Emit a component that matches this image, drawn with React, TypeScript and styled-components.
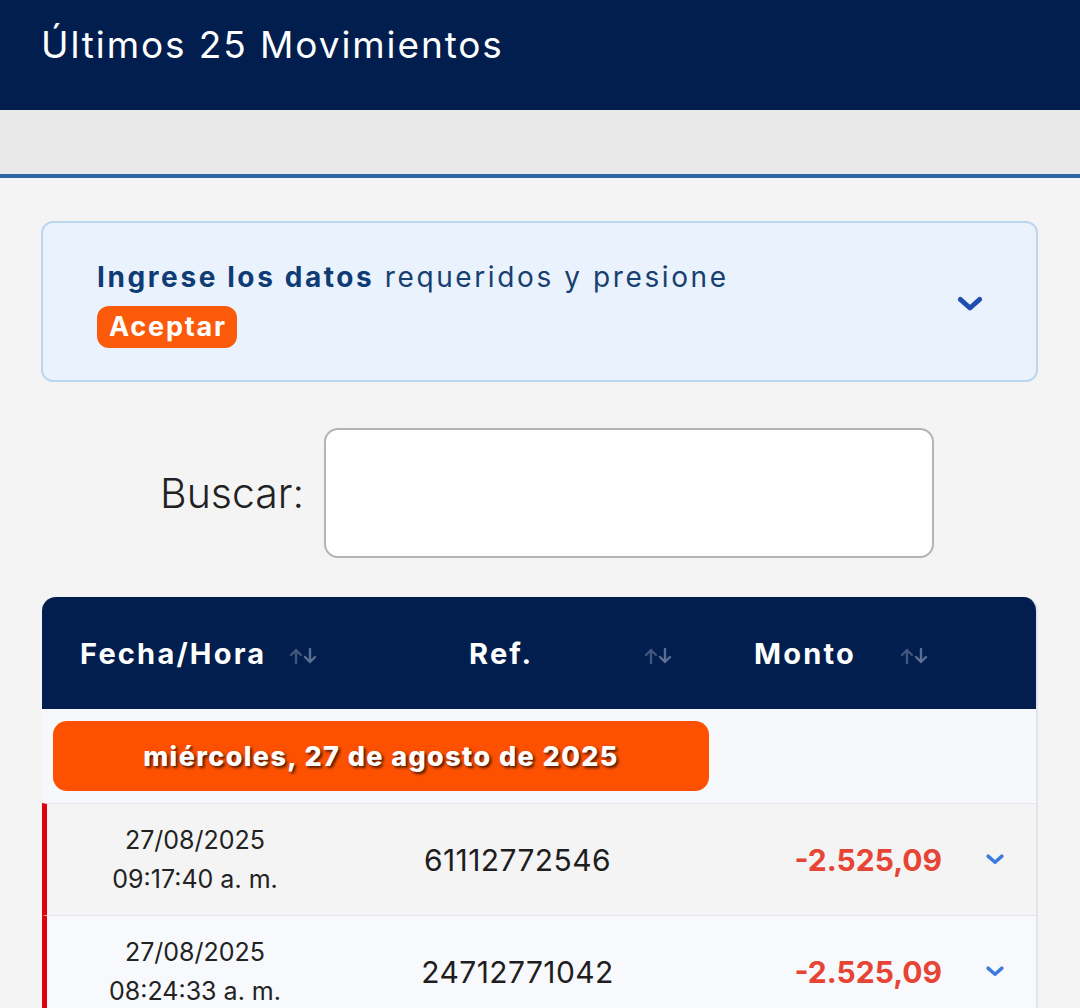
import { createGlobalStyle, styled } from "styled-components";

const GlobalStyle = createGlobalStyle`
  body {
    margin: 0;
    background: #f4f4f4;
    font-family: Inter, "Open Sans", sans-serif;
    color: #222;
  }
`;

type Movement = {
  date: string;
  time: string;
  ref: string;
  amount: string;
};

const movements: Movement[] = [
  { date: "27/08/2025", time: "09:17:40 a. m.", ref: "61112772546", amount: "-2.525,09" },
  { date: "27/08/2025", time: "08:24:33 a. m.", ref: "24712771042", amount: "-2.525,09" },
];

function Chevron({ color, width }: { color: string; width: number }) {
  return (
    <svg width={width} height={width * 0.62} viewBox="0 0 26 16" fill="none">
      <path d="M4 4 L13 12 L22 4" stroke={color} strokeWidth="4.5" strokeLinecap="round" strokeLinejoin="round" />
    </svg>
  );
}

function SortIcon() {
  return (
    <svg width="32" height="18" viewBox="0 0 32 18" fill="none">
      <path d="M9 16 V3 M4 8 L9 3 L14 8" stroke="#42567c" strokeWidth="2.4" strokeLinecap="round" strokeLinejoin="round" />
      <path d="M23 2 V15 M18 10 L23 15 L28 10" stroke="#5a6e93" strokeWidth="2.4" strokeLinecap="round" strokeLinejoin="round" />
    </svg>
  );
}

function App() {
  return (
    <>
      <GlobalStyle />
      <Header>
        <h1>Últimos 25 Movimientos</h1>
      </Header>
      <SubBar />
      <Content>
        <InfoBox>
          <div>
            <InfoText>
              <strong>Ingrese los datos</strong> requeridos y presione
            </InfoText>
            <Badge>Aceptar</Badge>
          </div>
          <Chevron color="#1c4fae" width={28} />
        </InfoBox>

        <SearchRow>
          <label htmlFor="buscar">Buscar:</label>
          <SearchInput id="buscar" type="text" />
        </SearchRow>

        <Table>
          <HeadRow>
            <HeadCell $pad={38} $gap={21}>
              Fecha/Hora <SortIcon />
            </HeadCell>
            <HeadCell $pad={120} $gap={109}>
              Ref. <SortIcon />
            </HeadCell>
            <HeadCell $pad={72} $gap={42}>
              Monto <SortIcon />
            </HeadCell>
            <div />
          </HeadRow>
          <GroupRow>
            <DateChip>miércoles, 27 de agosto de 2025</DateChip>
          </GroupRow>
          {movements.map((m, i) => (
            <Row key={m.ref} $alt={i % 2 === 1}>
              <DateCell>
                <span>{m.date}</span>
                <span>{m.time}</span>
              </DateCell>
              <RefCell>{m.ref}</RefCell>
              <AmountCell>{m.amount}</AmountCell>
              <ToggleCell>
                <Chevron color="#3b7be0" width={20} />
              </ToggleCell>
            </Row>
          ))}
        </Table>
      </Content>
    </>
  );
}

const Header = styled.header`
  height: 110px;
  background: #011e4f;
  padding: 21px 41px 0;
  box-sizing: border-box;

  h1 {
    margin: 0;
    font-size: 37px;
    line-height: 48px;
    letter-spacing: 1.9px;
    font-weight: 400;
    color: #fff;
  }
`;

const SubBar = styled.div`
  height: 64px;
  background: #e9e9e9;
  border-bottom: 4px solid #2c64a5;
`;

const Content = styled.main`
  height: 830px;
  overflow: hidden;
  padding: 43px 42px 0 41px;
  box-sizing: border-box;
`;

const InfoBox = styled.section`
  height: 161px;
  box-sizing: border-box;
  display: flex;
  align-items: center;
  justify-content: space-between;
  padding: 4px 52px 0 54px;
  background: #e9f2fd;
  border: 2px solid #bcd6f0;
  border-radius: 12px;
`;

const InfoText = styled.p`
  margin: 0 0 12px;
  font-size: 28px;
  letter-spacing: 2.6px;
  color: #17406f;
  font-weight: 400;

  strong {
    font-weight: 700;
    color: #0f3c74;
  }
`;

const Badge = styled.span`
  display: inline-block;
  background: #fa5a0a;
  color: #fff;
  font-weight: 700;
  font-size: 27px;
  letter-spacing: 1.8px;
  line-height: 42px;
  padding: 0 10px 0 12px;
  border-radius: 12px;
`;

const SearchRow = styled.div`
  display: flex;
  align-items: center;
  gap: 20px;
  margin-top: 46px;
  padding-left: 119px;

  label {
    font-size: 41px;
    font-weight: 300;
    color: #222;
  }
`;

const SearchInput = styled.input`
  width: 610px;
  height: 130px;
  box-sizing: border-box;
  border: 2px solid #b4b4b4;
  border-radius: 14px;
  background: #fff;
  outline: none;
`;

const Table = styled.div`
  margin-top: 39px;
  margin-left: 1px;
  border-right: 2px solid #e2e4ea;
  border-radius: 14px 14px 0 0;
  overflow: hidden;
`;

const columns = "307px 333px 284px 1fr";

const HeadRow = styled.div`
  display: grid;
  grid-template-columns: ${columns};
  height: 112px;
  background: #011e4f;
`;

const HeadCell = styled.div<{ $pad: number; $gap: number }>`
  display: flex;
  align-items: center;
  padding-left: ${(p) => p.$pad}px;
  gap: ${(p) => p.$gap}px;
  color: #fff;
  font-weight: 700;
  font-size: 29px;
  letter-spacing: 2.2px;

  svg {
    margin-top: 6px;
    flex-shrink: 0;
  }
`;

const GroupRow = styled.div`
  height: 94px;
  box-sizing: border-box;
  padding: 12px 11px;
  background: #f7f8fc;
`;

const DateChip = styled.div`
  width: 656px;
  height: 70px;
  display: flex;
  align-items: center;
  justify-content: center;
  background: #fe5100;
  border-radius: 14px;
  color: #fff;
  font-weight: 800;
  font-size: 27px;
  letter-spacing: 1.4px;
  text-shadow: 2px 2px 3px rgba(0, 0, 0, 0.7);
`;

const Row = styled.div<{ $alt: boolean }>`
  display: grid;
  grid-template-columns: ${columns};
  height: 112px;
  align-items: center;
  border-top: 1px solid #e4e5e9;
  border-left: 5px solid #e1000e;
  background: ${(p) => (p.$alt ? "#f8f9fc" : "#f4f4f4")};
  box-sizing: border-box;
`;

const DateCell = styled.div`
  display: flex;
  flex-direction: column;
  align-items: center;
  font-size: 25px;
  line-height: 39px;
  color: #222;
  margin-left: -11px;
`;

const RefCell = styled.div`
  text-align: center;
  padding-right: 6px;
  font-size: 30px;
  letter-spacing: 0.4px;
  color: #1e1e1e;
`;

const AmountCell = styled.div`
  text-align: right;
  padding-right: 29px;
  font-size: 30px;
  font-weight: 700;
  color: #e64434;
`;

const ToggleCell = styled.div`
  display: flex;
  justify-content: center;
  padding-right: 18px;
`;

export default App;
